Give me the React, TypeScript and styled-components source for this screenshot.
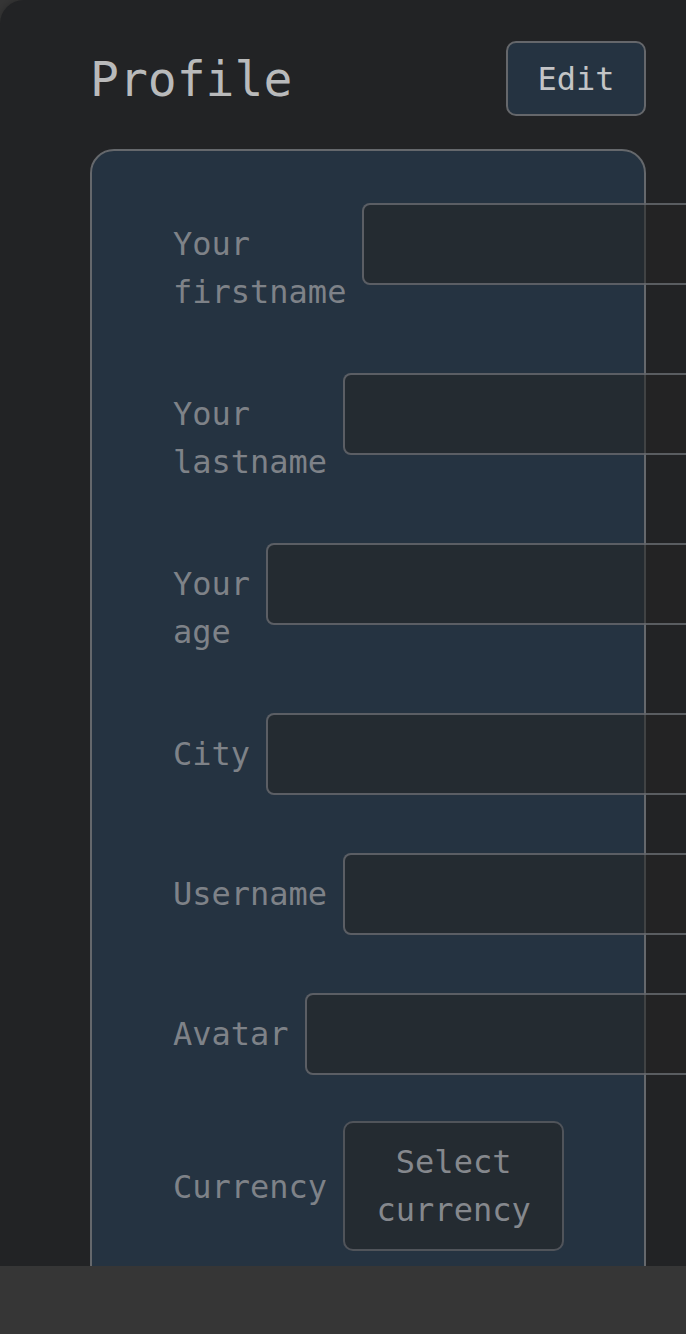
import React from "react";
import styled, { createGlobalStyle } from "styled-components";

const GlobalStyle = createGlobalStyle`
  html, body {
    margin: 0;
    padding: 0;
    background: #363636;
  }
  body {
    font-family: "DejaVu Sans Mono", "Liberation Mono", monospace;
    overflow: hidden;
  }
  * { box-sizing: border-box; }
`;

const Card = styled.main`
  height: 1266px;
  overflow: hidden;
  background: #222325;
  border-top-left-radius: 24px;
  padding: 41px 40px 0 90px;
  box-shadow: 0 0 10px rgba(0, 0, 0, 0.25);
`;

const Header = styled.header`
  display: flex;
  align-items: center;
  justify-content: space-between;
  margin-bottom: 33px;
`;

const Title = styled.h1`
  margin: 0;
  font-size: 48px;
  font-weight: 400;
  line-height: 60px;
  color: #b9babb;
`;

const EditButton = styled.button`
  font-family: inherit;
  font-size: 32px;
  line-height: 48px;
  color: #c3c4c6;
  background: #253341;
  border: 2px solid #65676b;
  border-radius: 10px;
  padding: 0;
  width: 140px;
  height: 75px;
`;

const Panel = styled.section`
  background: #253341;
  border: 2px solid #65686c;
  border-radius: 24px;
  padding: 40px 80px 60px 81px;
  display: flex;
  flex-direction: column;
  gap: 46px;
`;

const Row = styled.div<{ $center?: boolean }>`
  display: flex;
  align-items: ${(p) => (p.$center ? "center" : "baseline")};
  gap: 16px;
`;

const Label = styled.label`
  font-size: 32px;
  line-height: 48px;
  color: #7e8288;
  margin-bottom: -1px;
`;

const Input = styled.input`
  flex: 0 0 auto;
  width: 560px;
  height: 82px;
  margin-top: 12px;
  padding: 0 16px;
  font-family: inherit;
  font-size: 32px;
  color: #c0c0c0;
  background: rgba(36, 36, 37, 0.55);
  border: 2px solid rgba(110, 112, 118, 0.75);
  border-radius: 8px;
  outline: none;
`;

const SelectButton = styled.button`
  flex: 0 0 auto;
  width: 221px;
  height: 130px;
  font-family: inherit;
  font-size: 32px;
  line-height: 48px;
  color: #85888d;
  background: rgba(36, 36, 37, 0.55);
  border: 2px solid rgba(110, 112, 118, 0.6);
  border-radius: 10px;
  padding: 0 20px;
  text-align: center;
`;

const fields = [
  { id: "firstname", label: "Your firstname" },
  { id: "lastname", label: "Your lastname" },
  { id: "age", label: "Your age" },
  { id: "city", label: "City" },
  { id: "username", label: "Username" },
  { id: "avatar", label: "Avatar" },
];

export default function App() {
  return (
    <>
      <GlobalStyle />
      <Card>
        <Header>
          <Title>Profile</Title>
          <EditButton>Edit</EditButton>
        </Header>
        <Panel>
          {fields.map((f) => (
            <Row key={f.id}>
              <Label htmlFor={f.id}>{f.label}</Label>
              <Input id={f.id} readOnly />
            </Row>
          ))}
          <Row $center>
            <Label>Currency</Label>
            <SelectButton>Select currency</SelectButton>
          </Row>
        </Panel>
      </Card>
    </>
  );
}
